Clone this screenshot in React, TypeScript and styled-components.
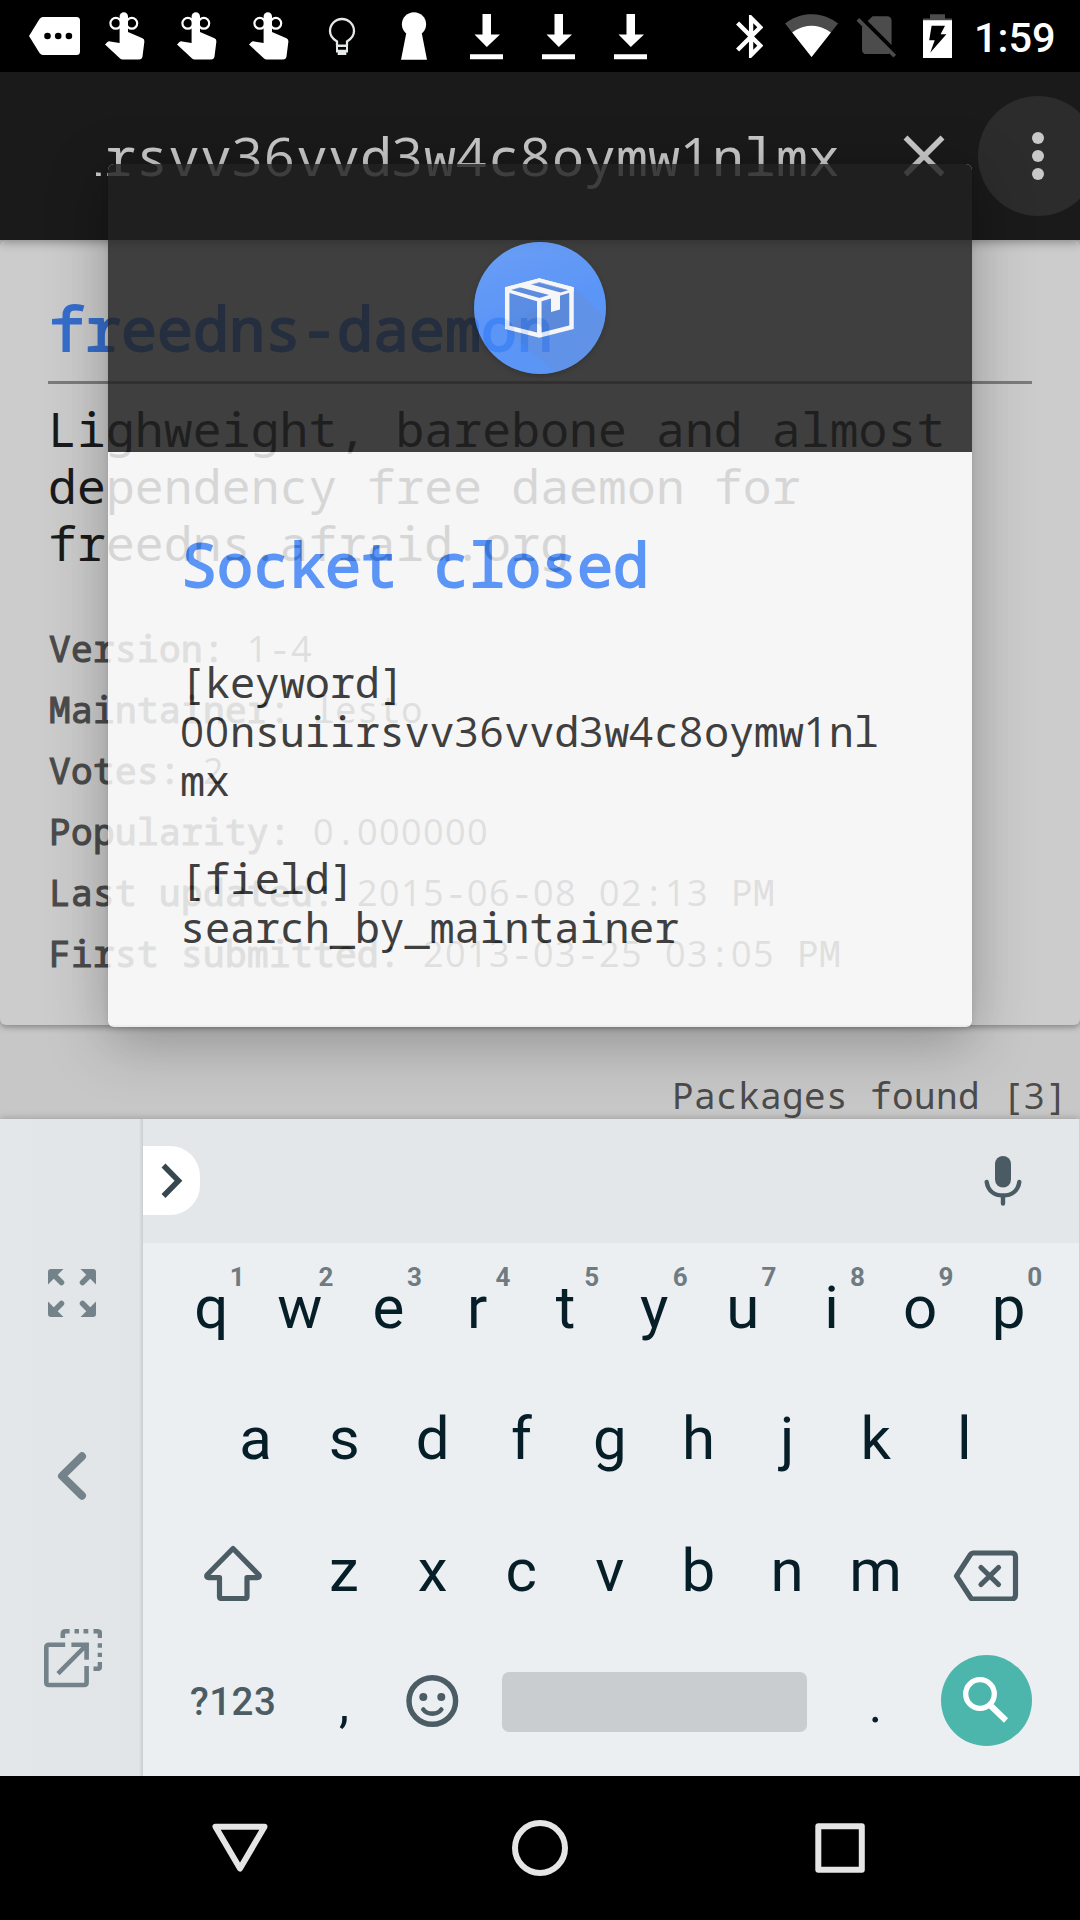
import React from 'react';
import styled, { createGlobalStyle } from 'styled-components';

const GlobalStyle = createGlobalStyle`
  html, body { margin: 0; padding: 0; background: #000; }
  * { box-sizing: border-box; }
`;

const Screen = styled.div`
  position: relative;
  width: 1080px;
  height: 1920px;
  display: flex;
  flex-direction: column;
  overflow: hidden;
  background: #c7c7c7;
  font-family: Roboto, sans-serif;
`;

/* ---------- Monospace text ---------- */

const MonoText = styled.span<{ $size: number; $pitch: number; $bold?: boolean }>`
  display: block;
  padding-left: ${(p) => (p.$bold ? 1 : 0)}px;
  font-family: 'Noto Sans Mono', 'DejaVu Sans Mono', monospace;
  font-size: ${(p) => p.$size}px;
  letter-spacing: ${(p) => p.$pitch - p.$size * 0.6}px;
  -webkit-text-stroke: ${(p) => (p.$bold ? p.$size / 32 : 0)}px currentColor;
  font-variant-ligatures: none;
  white-space: pre;
`;

const Digits = styled.span<{ $size: number; $pitch: number }>`
  font-family: 'Open Sans', 'Noto Sans', sans-serif;
  font-size: ${(p) => p.$size}px;
  line-height: 0;
  letter-spacing: ${(p) => p.$pitch - p.$size * 0.572}px;
`;

type MonoProps = { text: string; size: number; pitch: number; bold?: boolean };

const Mono = ({ text, size, pitch, bold }: MonoProps) => (
  <MonoText $size={size} $pitch={pitch} $bold={bold}>
    {text.split(/(\d+)/).map((part, i) =>
      /\d/.test(part) ? (
        <Digits key={i} $size={size} $pitch={pitch}>
          {part}
        </Digits>
      ) : (
        part
      ),
    )}
  </MonoText>
);

/* ---------- Status bar ---------- */

const StatusBar = styled.header`
  flex: none;
  height: 72px;
  display: flex;
  justify-content: space-between;
  padding-left: 18px;
  background: #000;
  color: #fff;
`;

const Notifications = styled.div`
  display: flex;
`;

const SystemIcons = styled.div`
  display: grid;
  grid-template-columns: 49px 71px 67px 51px 106px;
  align-items: start;
  svg { display: block; }
`;

const Clock = styled.time`
  font-size: 41.500px;
  font-weight: 500;
  line-height: 76px;
`;

const Slot = ({ children }: { children: React.ReactNode }) => (
  <svg width="72" height="72" viewBox="0 0 72 72" fill="#fff">
    {children}
  </svg>
);

const MoreIcon = () => (
  <Slot>
    <path d="M11 36 21.500 19Q23 17 25 17H58.500Q62 17 62 20.500V51.500Q62 55 58.500 55H25Q23 55 21.500 53Z" />
    <circle cx="29.500" cy="36" r="3.300" fill="#000" />
    <circle cx="40.200" cy="36" r="3.300" fill="#000" />
    <circle cx="50.900" cy="36" r="3.300" fill="#000" />
  </Slot>
);

const ReminderIcon = () => (
  <Slot>
    <circle cx="25.800" cy="23.300" r="5.400" fill="none" stroke="#fff" strokeWidth="2.200" />
    <circle cx="41.800" cy="23.300" r="5.400" fill="none" stroke="#fff" strokeWidth="2.200" />
    <path d="M29.600 16.500a4.200 4.200 0 0 1 8.400 0V32L52.500 38.300Q54.600 39.300 54.400 41.500L52.500 56.500Q52 59.500 49 59.500H32.500Q31 59.500 29.800 58.300L15 44.500 17.200 42.200Q18.300 41.100 20 41.400L29.600 43Z" />
  </Slot>
);

const BulbIcon = () => (
  <Slot>
    <path d="M31 45.500V41.500C26 38.500 24 35 24 31a12 12 0 0 1 24 0C48 35 46 38.500 41 41.500V45.500" fill="none" stroke="#e6eae6" strokeWidth="2.300" />
    <path d="M30 44.500H42V52.500H40.300V55H31.700V52.500H30ZM32 47V49.700H40V47Z" fill="#e6eae6" fillRule="evenodd" />
  </Slot>
);

const KeyholeIcon = () => (
  <Slot>
    <circle cx="36" cy="24.300" r="12.100" />
    <path d="M28.500 32H43.500L49 59.700H23Z" />
  </Slot>
);

const DownloadIcon = () => (
  <Slot>
    <path d="M32.500 14H41V34.500H50L36.800 47 24.500 34.500H32.500ZM20 54.300H53V59.200H20Z" />
  </Slot>
);

/* ---------- Toolbar ---------- */

const Toolbar = styled.div`
  position: relative;
  flex: none;
  height: 168px;
  display: flex;
  align-items: center;
  padding-left: 96px;
  background: #1a1a1a;
  box-shadow: 0 2px 10px rgba(0, 0, 0, 0.35);
  z-index: 1;
`;

const SearchField = styled.div`
  flex: none;
  width: 744px;
  height: 80px;
  display: flex;
  justify-content: flex-end;
  overflow: hidden;
  line-height: 80px;
  color: #c8c8c8;
`;

const ClearButton = styled.button`
  flex: none;
  width: 138px;
  display: flex;
  justify-content: center;
  padding: 0 0 0 30px;
  border: 0;
  background: none;
`;

const OverflowButton = styled.button`
  flex: none;
  width: 120px;
  height: 120px;
  padding: 0;
  border: 0;
  border-radius: 50%;
  background: #2c2c2c;
  svg { display: block; }
`;

/* ---------- Package card ---------- */

const Card = styled.article`
  flex: none;
  height: 785px;
  padding: 48px 48px 0;
  border-radius: 6px;
  background: #ccc;
  box-shadow: 0 2px 6px rgba(0, 0, 0, 0.35);
`;

const PackageName = styled.h1`
  margin: 0;
  padding-bottom: 13px;
  border-bottom: 3px solid #7b7b7b;
  font-weight: 400;
  line-height: 80px;
  color: #366ecc;
`;

const Description = styled.p`
  margin: 16px 0 47px;
  line-height: 57px;
  color: #1a1a1a;
`;

const Line = styled.span<{ $height: number }>`
  display: block;
  height: ${(p) => p.$height}px;
  line-height: ${(p) => p.$height}px;
`;

const Details = styled.dl`
  margin: 0;
  color: #4b4b4b;
`;

const Detail = styled.div`
  height: 61px;
  display: flex;
  gap: 22px;
  line-height: 61px;
  dt, dd { margin: 0; }
`;

const ResultCount = styled.p`
  flex: none;
  height: 43px;
  margin: 51px 12px 0 0;
  text-align: right;
  line-height: 40px;
  color: #4b4b4b;
`;

/* ---------- Dialog ---------- */

const Dialog = styled.section`
  position: absolute;
  left: 108px;
  top: 164px;
  width: 864px;
  height: 863px;
  display: flex;
  flex-direction: column;
  border-radius: 6px;
  background: #fff;
  box-shadow: 0 14px 58px rgba(0, 0, 0, 0.34), 0 2px 6px rgba(0, 0, 0, 0.12);
  opacity: 0.825;
  z-index: 3;
`;

const DialogHeader = styled.div`
  height: 288px;
  display: flex;
  align-items: center;
  justify-content: center;
  border-radius: 6px 6px 0 0;
  background: #212121;
`;

const Badge = styled.div`
  width: 132px;
  height: 132px;
  border-radius: 50%;
  overflow: hidden;
  background: linear-gradient(160deg, #5796ff, #448aff 50%);
  box-shadow: 0 2px 5px rgba(0, 0, 0, 0.4);
`;

const DialogBody = styled.div`
  padding: 82px 72px 0;
  color: #212121;
`;

const DialogTitle = styled.h2`
  margin: 0 0 63px;
  font-weight: 400;
  line-height: 60px;
  color: #448aff;
`;

/* ---------- Keyboard ---------- */

const PITCH = 88.6;
const WIDE = 133.2;

const Keyboard = styled.section`
  position: relative;
  flex: none;
  height: 657px;
  display: flex;
  padding-right: 1px;
  background: #cdd1d4;
  box-shadow: 0 0 8px rgba(0, 0, 0, 0.25);
  z-index: 2;
`;

const SideRail = styled.aside`
  width: 143px;
  display: flex;
  flex-direction: column;
  align-items: center;
  gap: 122.500px;
  padding-top: 144px;
  background: linear-gradient(90deg, #e3e7ea 0, #e1e5e8 139px, #c9cdd0 143px);
  svg { flex: none; display: block; }
`;

const KeysPane = styled.div`
  flex: 1;
  display: flex;
  flex-direction: column;
  background: #ebeff2;
`;

const Suggestions = styled.div`
  height: 124px;
  display: flex;
  align-items: center;
  justify-content: space-between;
  padding: 0 46px 1px 0;
  background: #e3e7ea;
`;

const ExpandPill = styled.button`
  width: 57px;
  height: 69px;
  padding: 0;
  border: 0;
  border-radius: 0 30px 30px 0;
  background: #fff;
  svg { display: block; }
`;

const KeyRow = styled.div<{ $indent: number }>`
  height: 131px;
  display: flex;
  align-items: center;
  padding-left: ${(p) => p.$indent}px;
`;

const Key = styled.div<{ $width?: number; $raised?: boolean }>`
  position: relative;
  flex: none;
  width: ${(p) => p.$width ?? PITCH}px;
  height: 131px;
  display: flex;
  align-items: center;
  justify-content: center;
  padding-bottom: ${(p) => (p.$raised ? 2 : 0)}px;
  font-size: 60px;
  line-height: 131px;
  color: #051e28;
`;

const PunctuationKey = styled(Key)`
  padding-top: 5px;
  font-size: 51px;
`;

const Hint = styled.span`
  position: absolute;
  left: 50%;
  top: 19px;
  width: 52px;
  text-align: center;
  font-size: 26px;
  font-weight: 700;
  line-height: 30px;
  color: #6f7b81;
`;

const SymbolsLabel = styled.span`
  font-size: 38.500px;
  font-weight: 500;
  letter-spacing: 0.500px;
  color: #4b5c64;
`;

const SpaceBar = styled.span`
  width: 305px;
  height: 60px;
  border-radius: 7px;
  background: #c9cdd0;
`;

const SearchKey = styled.span`
  width: 91px;
  height: 91px;
  margin: 0 0 2px 1px;
  border-radius: 50%;
  background: #4db6ac;
  svg { display: block; }
`;

/* ---------- Navigation bar ---------- */

const NavBar = styled.nav`
  flex: none;
  height: 144px;
  display: flex;
  align-items: center;
  justify-content: center;
  gap: 240px;
  background: #000;
`;

const hinted = 'qwertyuiop'.split('').map((k, i) => [k, String((i + 1) % 10)]);

const details: [string, string][] = [
  ['Version:', '1-4'],
  ['Maintainer:', 'lesto'],
  ['Votes:', '2'],
  ['Popularity:', '0.000000'],
  ['Last updated:', '2015-06-08 02:13 PM'],
  ['First submitted:', '2013-03-25 03:05 PM'],
];

const description = ['Lighweight, barebone and almost', 'dependency free daemon for', 'freedns.afraid.org'];

const message = ['[keyword]', '00nsuiirsvv36vvd3w4c8oymw1nl', 'mx', '', '[field]', 'search_by_maintainer'];

const PackageLogo = () => (
  <svg width="132" height="132" viewBox="0 0 132 132">
    <path d="M99.700 45 140 85 130 150H104L31 87Z" fill="#5a7fc4" opacity="0.300" />
    <path d="M33 47 65.500 58 97.500 47V87L65.500 95 33 87Z" fill="#3f74cf" opacity="0.450" />
    <g fill="none" stroke="#fff" strokeWidth="4.500">
      <path d="M65.300 38.600 97.500 47V85.300L65.300 93.400 33.200 85.300V47Z" />
      <path d="M65.300 58V93" />
    </g>
    <path d="M36.500 47.700 65.300 39.800 95 48 65.500 56Z" fill="#3f74cf" opacity="0.550" />
    <path
      fill="#fff"
      fillRule="evenodd"
      d="M65.300 36.300 99.700 45.300V49.500L65.300 60 31 49.500V45.300ZM36.500 47.700 45 45 75 53 65.500 56ZM56.500 42.300 65.300 39.800 95 48 86.500 50.500Z"
    />
    <path d="M77 53 86 50.500V67.500L77 70Z" fill="#fff" />
  </svg>
);

export default function App() {
  return (
    <Screen>
      <GlobalStyle />
      <StatusBar>
        <Notifications>
          <MoreIcon />
          <ReminderIcon />
          <ReminderIcon />
          <ReminderIcon />
          <BulbIcon />
          <KeyholeIcon />
          <DownloadIcon />
          <DownloadIcon />
          <DownloadIcon />
        </Notifications>
        <SystemIcons>
          <svg width="27" height="72" viewBox="0 0 27 72" fill="#fff">
            <path transform="translate(-10.700 10.700) scale(2.150)" d="M17.710 7.710L12 2h-1v7.590L6.410 5 5 6.410 10.590 12 5 17.590 6.410 19 11 14.410V22h1l5.710-5.710-4.300-4.290 4.300-4.290zM13 5.830l1.880 1.880L13 9.590V5.830zm1.880 10.460L13 18.170v-3.760l1.880 1.880z" />
          </svg>
          <svg width="53" height="72" viewBox="0 0 53 72" fill="#fff">
            <g transform="translate(-0.800 7.200) scale(2.280 2.320)">
              <path fill="#4c4c4c" d="M12.010 21.490L23.640 7c-.45-.34-4.930-4-11.640-4C5.280 3 .81 6.660.36 7l11.630 14.490.01.01.01-.01z" />
              <path d="M3.530 10.950l8.460 10.540.01.01.01-.01 8.460-10.540C20.040 10.620 16.810 8 12 8c-4.810 0-8.040 2.620-8.470 2.950z" />
            </g>
          </svg>
          <svg width="40" height="72" viewBox="0 0 40 72" fill="#4c4c4c">
            <path transform="translate(-4.500 9.800) scale(2.110)" d="M18.990 5c0-1.100-.89-2-1.990-2h-7L7.660 5.340 19 16.680 18.990 5zM3.650 3.880L2.380 5.150 5 7.770V19c0 1.100.9 2 2 2h10.010c.35 0 .67-.1.96-.26l1.880 1.880 1.270-1.270L3.650 3.880z" />
          </svg>
          <svg width="29" height="72" viewBox="0 0 29 72">
            <path fill="#4c4c4c" d="M7 14.300H22V18.500H29V21H0V18.500H7Z" />
            <path fill="#fff" fillRule="evenodd" d="M0 20.300H29V58H0ZM8.600 25.700 6.200 40.300H11.700L7.200 52.700 23.400 34.300H17.600L22 25.700Z" />
          </svg>
          <Clock>1:59</Clock>
        </SystemIcons>
      </StatusBar>

      <Toolbar>
        <SearchField>
          <Mono text="irsvv36vvd3w4c8oymw1nlmx" size={53.3} pitch={32} />
        </SearchField>
        <ClearButton aria-label="Clear">
          <svg width="42" height="42" viewBox="0 0 42 42" stroke="#c8c8c8" strokeWidth="5.500">
            <path d="M2.500 2.500 39.500 39.500M39.500 2.500 2.500 39.500" />
          </svg>
        </ClearButton>
        <OverflowButton aria-label="More options">
          <svg width="120" height="120" fill="#c8c8c8">
            <circle cx="60" cy="42" r="6" />
            <circle cx="60" cy="60" r="6" />
            <circle cx="60" cy="78" r="6" />
          </svg>
        </OverflowButton>
      </Toolbar>

      <Card>
        <PackageName>
          <Mono text="freedns-daemon" size={60} pitch={36} bold />
        </PackageName>
        <Description>
          {description.map((line) => (
            <Line key={line} $height={57}>
              <Mono text={line} size={48} pitch={28.95} />
            </Line>
          ))}
        </Description>
        <Details>
          {details.map(([label, value]) => (
            <Detail key={label}>
              <dt>
                <Mono text={label} size={36} pitch={22} bold />
              </dt>
              <dd>
                <Mono text={value} size={36} pitch={22} />
              </dd>
            </Detail>
          ))}
        </Details>
      </Card>
      <ResultCount>
        <Mono text="Packages found [3]" size={36} pitch={22} />
      </ResultCount>

      <Keyboard>
        <SideRail>
          <svg width="60" height="60" viewBox="0 0 60 60" fill="#74828a" stroke="#74828a">
            {[0, 90, 180, 270].map((angle) => (
              <g key={angle} transform={`rotate(${angle} 30 30)`}>
                <path stroke="none" d="M9 6H21.500L6 21.500V9Q6 6 9 6Z" />
                <path strokeWidth="5.500" strokeLinecap="round" d="M12 12 19.500 19.500" />
              </g>
            ))}
          </svg>
          <svg width="60" height="60" viewBox="0 0 60 60" fill="none" stroke="#74828a" strokeWidth="8" strokeLinecap="round" strokeLinejoin="round">
            <path d="M40 10.300 20 30 40 49.700" />
          </svg>
          <svg width="60" height="60" viewBox="0 0 60 60" fill="none" stroke="#74828a" strokeWidth="4.600">
            <path d="M23.200 16.700H7Q4.300 16.700 4.300 19.500V54.500Q4.300 57 7 57H42Q44.600 57 44.600 54.500V38" />
            <path d="M29.400 16.700H44.600V31.700M16 45.700 43.500 18" />
            <path stroke="none" fill="#74828a" d="M36 15H46.500V26Z" />
            <path d="M20.800 10V6Q20.800 3.300 23.500 3.300H27.600M32.500 3.300H37M41.500 3.300H46.300M51.500 3.300H55.500Q58 3.300 58 6V10M58 15.300V19.700M58 24.700V29M58 34V38Q58 40.700 55.500 40.700H51.500" />
          </svg>
        </SideRail>
        <KeysPane>
          <Suggestions>
            <ExpandPill aria-label="Expand">
              <svg width="57" height="69" viewBox="0 0 57 69" fill="none" stroke="#37474f" strokeWidth="5.500">
                <path d="M20.500 19.500 35.500 34.700 20.500 50" />
              </svg>
            </ExpandPill>
            <svg width="60" height="60" viewBox="0 0 60 60">
              <rect x="22" y="5" width="16" height="31.500" rx="8" fill="#4a5b63" />
              <path d="M13.700 31C15 40 21.500 44.500 30 44.500S45 40 46.300 31M30 45V52.500" fill="none" stroke="#4a5b63" strokeWidth="4.400" strokeLinecap="round" />
            </svg>
          </Suggestions>
          <KeyRow $indent={24}>
            {hinted.map(([letter, hint]) => (
              <Key key={letter} $raised>
                {letter}
                <Hint>{hint}</Hint>
              </Key>
            ))}
          </KeyRow>
          <KeyRow $indent={68.25}>
            {'asdfghjkl'.split('').map((letter) => (
              <Key key={letter} $raised>
                {letter}
              </Key>
            ))}
          </KeyRow>
          <KeyRow $indent={23.5}>
            <Key $width={WIDE}>
              <svg width="60" height="60" viewBox="0 0.500 60 60" fill="none" stroke="#4b5c64" strokeWidth="5.200" strokeLinejoin="round">
                <path d="M30 8 4 34.500Q3 37 6 37.200H16.500V56Q16.500 58 18.500 58H42Q44 58 44 56V37.200H54Q57 37 56 34.500Z" />
              </svg>
            </Key>
            {'zxcvbnm'.split('').map((letter) => (
              <Key key={letter}>{letter}</Key>
            ))}
            <Key $width={WIDE}>
              <svg width="66" height="60" viewBox="0 0.500 66 60" fill="none" stroke="#4b5c64" strokeWidth="5.200" strokeLinecap="round" strokeLinejoin="round">
                <path d="M20 12.500H58.500Q62.500 12.500 62.500 16.500V54.500Q62.500 58.500 58.500 58.500H20Q18.500 58.500 17.500 57L3.500 35.500 17.500 14Q18.500 12.500 20 12.500Z" />
                <path d="M28 27 45.500 44M45.500 27 28 44" />
              </svg>
            </Key>
          </KeyRow>
          <KeyRow $indent={23.5}>
            <Key $width={WIDE}>
              <SymbolsLabel>?123</SymbolsLabel>
            </Key>
            <PunctuationKey>,</PunctuationKey>
            <Key>
              <svg width="54" height="54" viewBox="0.700 0.500 54 54" fill="#4b5c64">
                <circle cx="27" cy="26.500" r="23.300" fill="none" stroke="#4b5c64" strokeWidth="5.400" />
                <circle cx="18" cy="22.500" r="4" />
                <circle cx="36" cy="22.500" r="4" />
                <path d="M18 35C22 40.500 32 40.500 36 35" fill="none" stroke="#4b5c64" strokeWidth="4.600" strokeLinecap="round" />
              </svg>
            </Key>
            <Key $width={PITCH * 4}>
              <SpaceBar />
            </Key>
            <PunctuationKey>.</PunctuationKey>
            <Key $width={WIDE}>
              <SearchKey>
                <svg width="91" height="91" viewBox="0 0 91 91" fill="none" stroke="#fff" strokeWidth="5.300">
                  <circle cx="39" cy="39" r="14.300" />
                  <path d="M50 51 65 65.500" strokeWidth="6" />
                </svg>
              </SearchKey>
            </Key>
          </KeyRow>
        </KeysPane>
      </Keyboard>

      <NavBar>
        <svg width="60" height="60" viewBox="0 0 60 60" fill="none" stroke="#e5e5e5" strokeWidth="6" strokeLinejoin="round">
          <path d="M5.500 8.700H54.500L30 50.500Z" />
        </svg>
        <svg width="60" height="60" viewBox="0 0 60 60" fill="none" stroke="#e5e5e5" strokeWidth="6">
          <circle cx="30" cy="30" r="25" />
        </svg>
        <svg width="60" height="60" viewBox="0 0 60 60" fill="none" stroke="#e5e5e5" strokeWidth="6" strokeLinejoin="round">
          <rect x="8.300" y="8.300" width="43.500" height="43.500" />
        </svg>
      </NavBar>

      <Dialog>
        <DialogHeader>
          <Badge>
            <PackageLogo />
          </Badge>
        </DialogHeader>
        <DialogBody>
          <DialogTitle>
            <Mono text="Socket closed" size={60} pitch={36} bold />
          </DialogTitle>
          {message.map((line, i) => (
            <Line key={i} $height={49}>
              <Mono text={line} size={42} pitch={24.95} />
            </Line>
          ))}
        </DialogBody>
      </Dialog>
    </Screen>
  );
}
